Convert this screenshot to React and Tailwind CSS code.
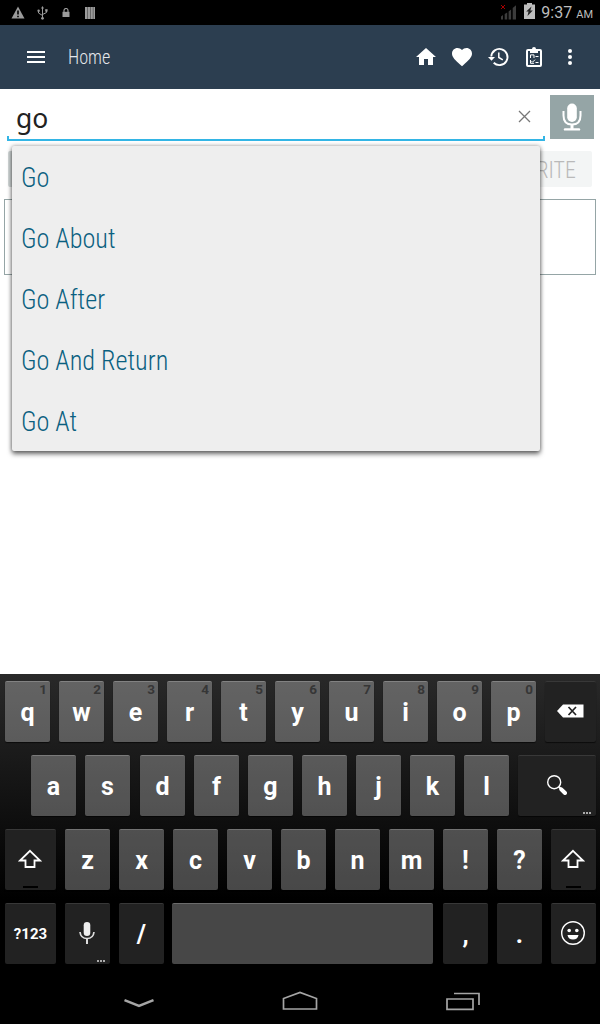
import React from 'react'

const suggestions = ['Go', 'Go About', 'Go After', 'Go And Return', 'Go At']

const topRow = [
    ['q', '1'],
    ['w', '2'],
    ['e', '3'],
    ['r', '4'],
    ['t', '5'],
    ['y', '6'],
    ['u', '7'],
    ['i', '8'],
    ['o', '9'],
    ['p', '0'],
]

const condensed = "font-['Roboto_Condensed','Roboto',sans-serif] [font-stretch:75%] font-light"

function StatusBar() {
    return (
        <div className="flex h-[25px] items-center justify-between bg-black pl-[11px] pr-[7px]">
            <div className="flex items-center text-[#9b9b9b]">
                {/* warning */}
                <svg className="h-[13px] w-[14px]" viewBox="0 0 14 13">
                    <path d="M7 0.5 13.5 12.5H0.5Z" fill="currentColor" />
                    <path d="M7 4.5V8.5M7 9.7V11.2" stroke="#000" strokeWidth="1.6" />
                </svg>
                {/* usb */}
                <svg className="ml-[12px] h-[14px] w-[11px]" viewBox="0 0 11 14" fill="none" stroke="currentColor">
                    <path d="M5.5 2V12M1.5 4.5V7L5.5 9.5M9.5 4V6.5L5.5 8.5" />
                    <path d="M5.5 0 7 2.5H4Z" fill="currentColor" stroke="none" />
                    <circle cx="5.5" cy="12.3" r="1.4" fill="currentColor" stroke="none" />
                    <circle cx="1.6" cy="4.7" r="1.2" fill="currentColor" stroke="none" />
                    <path d="M8.2 3.2h2.4v2.4H8.2z" fill="currentColor" stroke="none" />
                </svg>
                {/* lock */}
                <svg className="ml-[14px] h-[9px] w-[8px]" viewBox="0 0 8 9">
                    <path d="M2 4V2.5a2 2 0 0 1 4 0V4" fill="none" stroke="currentColor" strokeWidth="1.2" />
                    <path d="M0.5 3.8h7V9h-7z" fill="currentColor" />
                </svg>
                {/* barcode */}
                <svg className="ml-[15px] h-[12px] w-[10px]" viewBox="0 0 10 12">
                    <path d="M0 0h10v12H0z" fill="currentColor" />
                    <path d="M2.5 0v12M5.5 0v12M8.2 0v12" stroke="#333" strokeWidth=".5" />
                </svg>
            </div>
            <div className="flex items-center">
                <svg className="-mt-[2px] h-[16px] w-[17px]" viewBox="0 0 17 16">
                    <path d="M1 15.5v-3l2-1.5v4.5zM4.7 15.5V10l2.5-1.5v7zM8.6 15.5v-8l2.5-2v10zM12.7 15.5V4L16 1.2v14.300z" fill="#3c3c3c" />
                    <path d="M1 1l4 4M5 1 1 5" stroke="#a80000" />
                </svg>
                <svg className="-mt-[3px] ml-[7px] h-[16px] w-[11px]" viewBox="0 0 11 16">
                    <path d="M3 0h5v1.500h3V16H0V1.500h3z" fill="#bdbdbd" />
                    <path d="M7.500 3.500 2.200 8.500h2.300L3.500 13l5.300-5.500H6.300z" fill="#222" />
                </svg>
                <div className="ml-[6px] mt-px flex items-baseline font-['Roboto',sans-serif] leading-[25px] text-[#bdbdbd]">
                    <span className="text-[16px]">9:37</span>
                    <span className="ml-[4px] text-[11px]">AM</span>
                </div>
            </div>
        </div>
    )
}

function Header() {
    return (
        <div className="flex h-16 items-center bg-[#2c3e50] text-white">
            <svg className="ml-[24px] h-6 w-6" viewBox="0 0 24 24">
                <path d="M3 18h18v-2H3zM3 13h18v-2H3zM3 6v2h18V6z" fill="currentColor" />
            </svg>
            <span className={`ml-[20px] origin-left scale-x-[0.91] text-[20px] text-[#e4e7ea] ${condensed}`}>Home</span>
            <div className="ml-auto mr-[18px] flex items-center gap-3">
                <svg className="h-6 w-6" viewBox="0 0 24 24">
                    <path d="M10 20v-6h4v6h5v-8h3L12 3 2 12h3v8z" fill="currentColor" />
                </svg>
                <svg className="h-6 w-6" viewBox="0 0 24 24">
                    <path
                        d="M12 21.350l-1.450-1.320C5.400 15.360 2 12.280 2 8.500 2 5.420 4.420 3 7.500 3c1.740 0 3.410.810 4.500 2.090C13.090 3.810 14.760 3 16.500 3 19.580 3 22 5.420 22 8.500c0 3.780-3.400 6.860-8.550 11.540z"
                        fill="currentColor"
                    />
                </svg>
                {/* history */}
                <svg className="h-6 w-6" viewBox="0 0 24 24" fill="none" stroke="currentColor">
                    <path d="M5.300 11.500a8.100 8.100 0 1 1 2.400 6.300" strokeWidth="1.900" />
                    <path d="M2 12h7l-3.500 3.700z" fill="currentColor" stroke="none" />
                    <path d="M12.800 7.500v5l4 2.400" strokeWidth="1.500" />
                </svg>
                {/* clipboard with checklist */}
                <svg className="h-6 w-6" viewBox="0 0 24 24" fill="none" stroke="currentColor">
                    <rect x="5" y="5" width="14" height="16" rx="1" strokeWidth="2" />
                    <path d="M8 8V4h2a2 2 0 0 1 4 0h2v4z" fill="currentColor" stroke="none" />
                    <path d="M8.500 13V9.900H12V13M13.500 11.500h3M8.500 15v3.300h3.500M9.500 16.200l1 1 2.500-2.500M13.500 17.500h3" strokeWidth="1" />
                </svg>
                <svg className="h-6 w-6" viewBox="0 0 24 24" fill="currentColor">
                    <circle cx="12" cy="6" r="2" />
                    <circle cx="12" cy="12" r="2" />
                    <circle cx="12" cy="18" r="2" />
                </svg>
            </div>
        </div>
    )
}

function SearchRow() {
    return (
        <div className="flex pl-[7px] pt-[6px]">
            <div className="flex h-[46px] w-[538px] flex-col">
                <div className="flex h-[41px] items-center justify-between pl-[9px] pr-[14px]">
                    <span className="mt-[5px] font-['Noto_Sans',sans-serif] text-[26.500px] leading-[36px] text-[#222]">go</span>
                    <svg className="mt-[2px] h-[13px] w-[13px]" viewBox="0 0 13 13">
                        <path d="M1 1l11 11M12 1 1 12" stroke="#777" strokeWidth="1.300" />
                    </svg>
                </div>
                {/* holo style underline */}
                <div className="h-[5px] border-x-2 border-b-2 border-[#33b5e5]"></div>
            </div>
            <div className="ml-[5px] flex h-[44px] w-[44px] items-center justify-center bg-[#95a5a6]">
                <svg className="h-[28px] w-[20px]" viewBox="0 0 20 28" fill="none" stroke="#fff">
                    <rect x="5.200" y="0.500" width="9.600" height="18.500" rx="4.800" fill="#fff" stroke="none" />
                    <path d="M1.500 8v4.500c0 6 3.500 9 8.500 9s8.500-3 8.500-9V8" strokeWidth="2" />
                    <path d="M10 21.500V26" strokeWidth="3" />
                    <path d="M3 26.400h14" strokeWidth="2.400" strokeLinecap="round" />
                </svg>
            </div>
        </div>
    )
}

function Suggestions() {
    return (
        <div className="absolute left-[12px] top-[146px] w-[528px] rounded-[2px] bg-[#eeeeee] shadow-[0_3px_5px_0px_rgba(0,0,0,0.55),0_0_4px_0px_rgba(0,0,0,0.35)]">
            {suggestions.map((item) => (
                <div key={item} className={`flex h-[61px] items-center pl-[9px] pt-[3px] text-[28.500px] text-[#0a6080] ${condensed}`}>
                    <span className="origin-left scale-x-[0.92]">{item}</span>
                </div>
            ))}
        </div>
    )
}

function Key({ children, hint, dark, more, className = 'w-[45px]' }) {
    return (
        <div
            className={`relative flex h-[61px] shrink-0 items-center justify-center rounded-[2px] border-t pt-px text-[25px] font-bold text-white shadow-[0_1px_1px_rgba(0,0,0,0.6)] ${
                dark ? 'border-[#383838] bg-[#222222]' : 'border-white/20 bg-white/28'
            } ${className}`}
        >
            {children}
            {hint && (
                <span className="absolute right-[3px] top-0 text-[13.500px] leading-[15px] text-[#363636]">{hint}</span>
            )}
            {more && (
                <span className="absolute bottom-[2px] right-[5px] flex gap-px">
                    <i className="h-[2px] w-[2px] bg-[#aaa]"></i>
                    <i className="h-[2px] w-[2px] bg-[#aaa]"></i>
                    <i className="h-[2px] w-[2px] bg-[#aaa]"></i>
                </span>
            )}
        </div>
    )
}

function ShiftKey({ className }) {
    return (
        <Key dark className={className}>
            <svg className="mb-[3px] mr-[2px] h-[20px] w-[24px]" viewBox="0 0 24 20">
                <path d="M12 1.800 22 11.500H16.500V18H7.500V11.500H2Z" fill="none" stroke="#fff" strokeWidth="1.800" />
            </svg>
            <span className="absolute bottom-[2px] h-[2px] w-[15px] bg-black"></span>
        </Key>
    )
}

function Keyboard() {
    return (
        <div className="flex h-[350px] flex-col bg-black bg-[linear-gradient(to_bottom,#292929_0px,#000000_225px)] pl-[5px] pt-[7px] font-['Roboto',sans-serif]">
            <div className="flex gap-[9px]">
                {topRow.map(([letter, hint]) => (
                    <Key key={letter} hint={hint}>
                        {letter}
                    </Key>
                ))}
                <Key dark className="w-[51px]">
                    <svg className="mb-[3px] h-[14px] w-[27px]" viewBox="0 0 27 14">
                        <path d="M0 7 6 0.500H26.500V13.500H6Z" fill="#fff" />
                        <path d="M11.500 3 19 11M19 3 11.500 11" stroke="#222" strokeWidth="1.700" />
                    </svg>
                </Key>
            </div>
            <div className="mt-[13px] flex gap-[9px] pl-[26px]">
                {'asdfghjkl'.split('').map((letter) => (
                    <Key key={letter} className={letter === 's' ? 'mr-px w-[45px]' : 'w-[45px]'}>
                        {letter}
                    </Key>
                ))}
                <Key dark more className="w-[78px]">
                    <svg className="mb-[4px] h-[20px] w-[20px]" viewBox="0 0 20 20" fill="none" stroke="#fff">
                        <circle cx="7.200" cy="7.200" r="6.500" strokeWidth="1.400" />
                        <path d="M11.800 11.800l2 2" strokeWidth="2" />
                        <path d="M14.300 14.300l3.700 3.700" strokeWidth="4" strokeLinecap="round" />
                    </svg>
                </Key>
            </div>
            <div className="mt-[13px] flex gap-[9px]">
                <ShiftKey className="w-[51px]" />
                {'zxcvbnm!?'.split('').map((letter) => (
                    <Key key={letter}>{letter}</Key>
                ))}
                <ShiftKey />
            </div>
            <div className="mt-[13px] flex">
                <Key dark className="w-[51px]">
                    <span className="text-[15px]">?123</span>
                </Key>
                <Key dark more className="ml-[9px] w-[45px]">
                    <svg className="mb-[3px] mr-px h-[22px] w-[16px]" viewBox="0 0 16 22" fill="none" stroke="#ddd">
                        <rect x="4.700" y="0" width="6.600" height="14" rx="3.300" fill="#eee" stroke="none" />
                        <path d="M1 10c.5 4.500 3.500 6.500 7 6.500s6.500-2 7-6.500" strokeWidth="1.700" />
                        <path d="M8 16.500V22" strokeWidth="2" />
                    </svg>
                </Key>
                <Key dark className="ml-[9px] w-[45px]">
                    /
                </Key>
                <Key className="ml-[8px] w-[261px]" />
                <Key dark className="ml-[10px] w-[45px]">
                    ,
                </Key>
                <Key dark className="ml-[9px] w-[45px]">
                    .
                </Key>
                <Key dark className="ml-[9px] w-[45px]">
                    <svg className="mb-[4px] mr-[2px] h-[26px] w-[26px]" viewBox="0 0 26 26">
                        <circle cx="13" cy="13" r="11.300" fill="none" stroke="#fff" strokeWidth="1.400" />
                        <circle cx="9.200" cy="10.500" r="1.800" fill="#fff" />
                        <circle cx="16.800" cy="10.500" r="1.800" fill="#fff" />
                        <path d="M7.500 15h11c-.5 3-2.500 4.500-5.500 4.500S8 18 7.500 15z" fill="#fff" />
                    </svg>
                </Key>
            </div>
            <NavBar />
        </div>
    )
}

function NavBar() {
    return (
        <div className="flex h-[60px] items-start pl-[119px] pt-[27px] text-[#a5a5a5]">
            <svg className="mt-[7px] h-[10px] w-[30px]" viewBox="0 0 30 10">
                <path d="M0.500 2.200 15 8 29.500 2.200" fill="none" stroke="currentColor" strokeWidth="2.500" />
            </svg>
            <svg className="ml-[127px] h-[20px] w-[38px]" viewBox="0 0 38 20">
                <path d="M2.500 18V7.500L19 1.500 35.500 7.500V18Z" fill="none" stroke="currentColor" strokeWidth="1.700" />
            </svg>
            <svg className="ml-[126px] h-[20px] w-[36px]" viewBox="0 0 36 20" fill="none" stroke="currentColor" strokeWidth="1.700">
                <path d="M2 8h26v10.300H2zM9 2.500h25V14" />
            </svg>
        </div>
    )
}

export default function App() {
    return (
        <div className="relative flex h-[1024px] w-[600px] flex-col overflow-hidden bg-white">
            <StatusBar />
            <Header />
            <div className="h-[585px]">
                <SearchRow />
                <div className="mx-[8px] mt-[10px] flex h-[36px] justify-between">
                    <div className="w-[184px] rounded-[2px] bg-[#d4dada]"></div>
                    <div className={`flex w-[184px] items-center justify-end rounded-[2px] bg-[#f3f5f5] pr-[16px] pt-px text-[24px] text-[#b9b9b9] ${condensed}`}>
                        <span className="origin-right scale-x-[0.91]">FAVOURITE</span>
                    </div>
                </div>
                <div className="mx-[4px] mt-[12px] h-[76px] border border-[#95a5a6]"></div>
            </div>
            <Keyboard />
            <Suggestions />
        </div>
    )
}
